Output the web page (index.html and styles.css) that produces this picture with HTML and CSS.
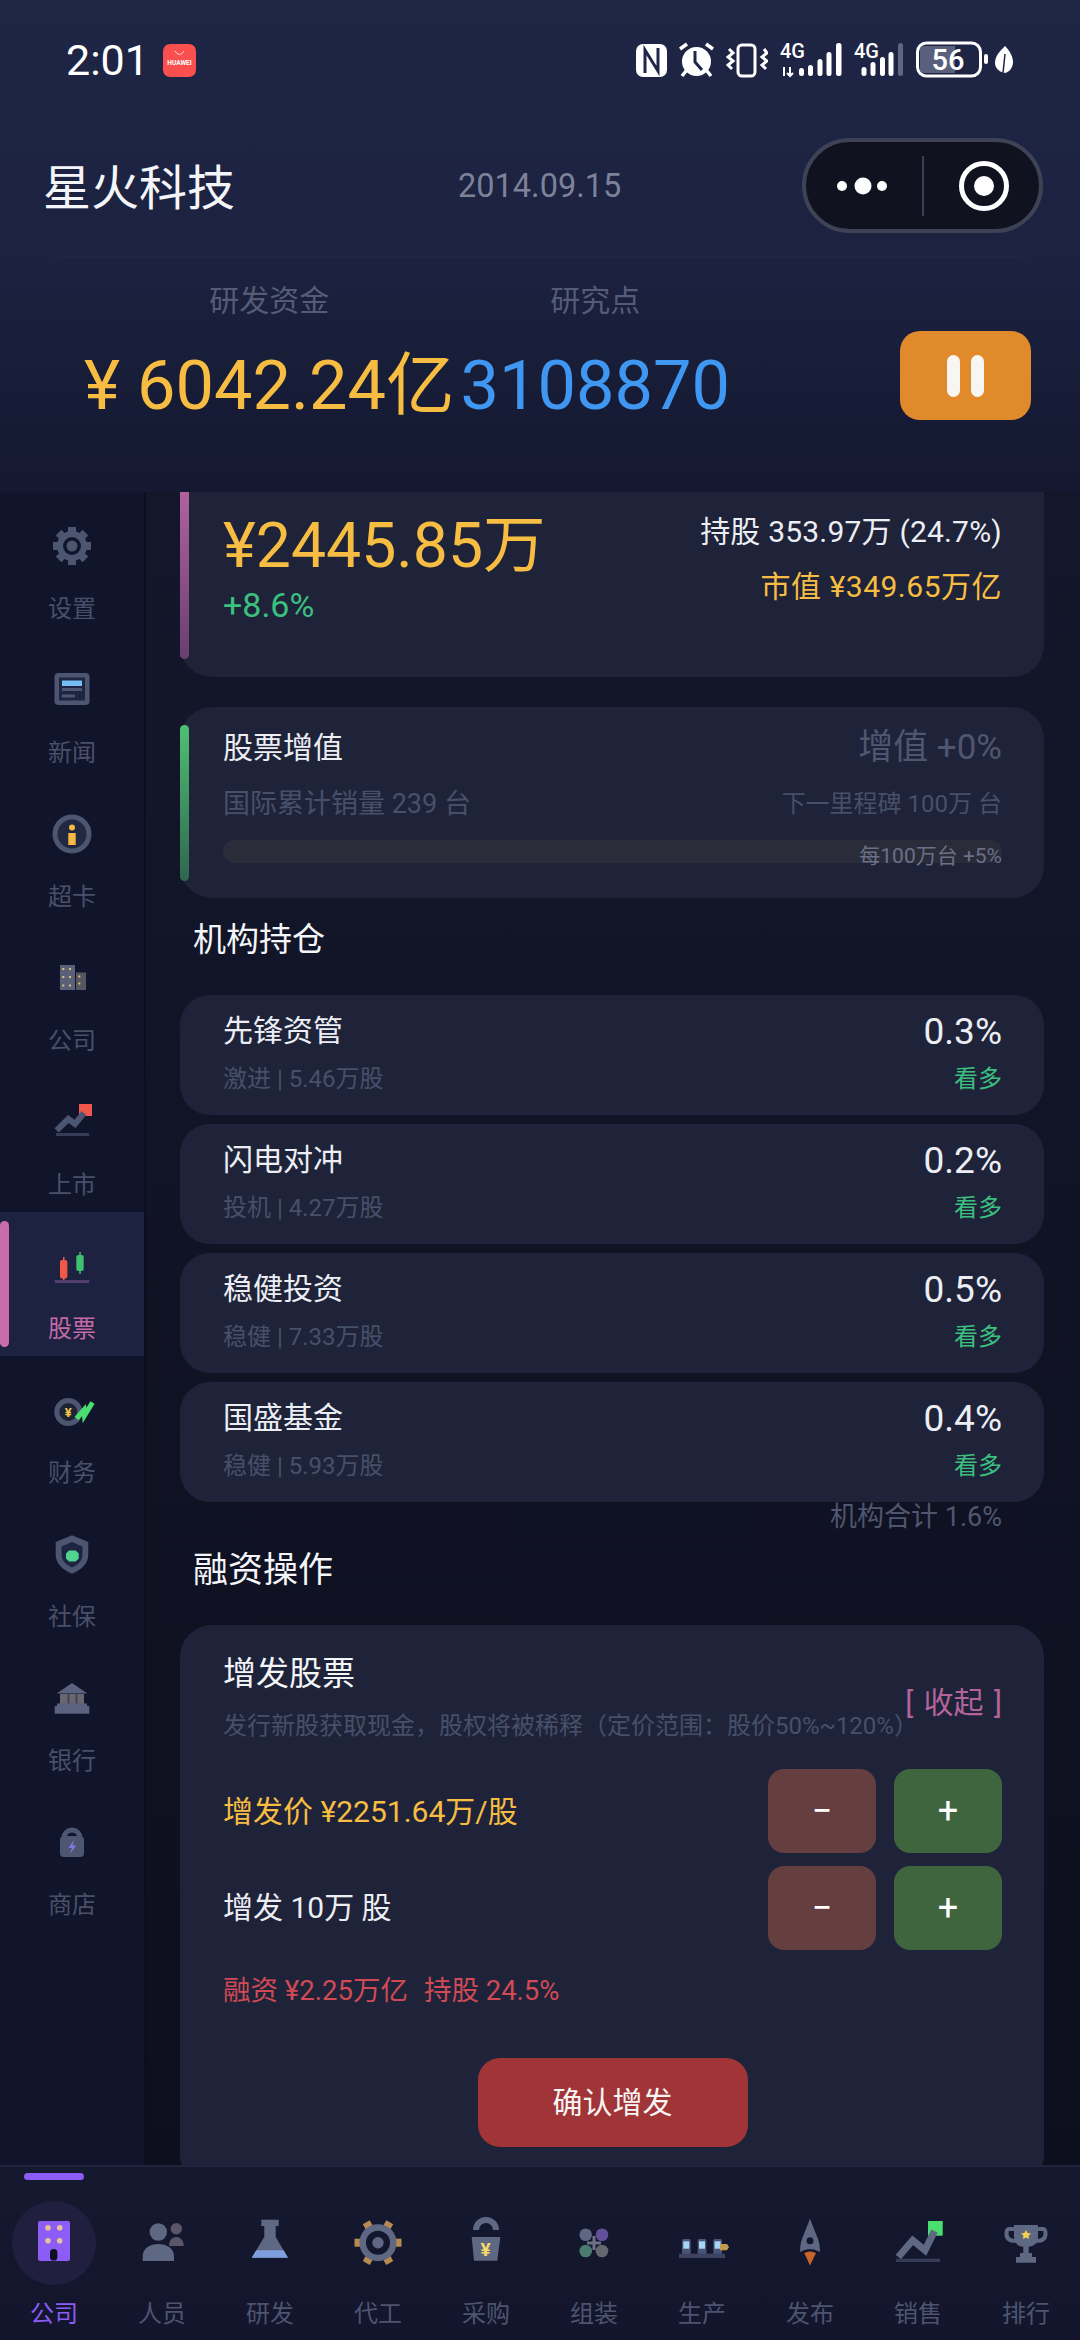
FILE: index.html
```html
<!DOCTYPE html>
<html lang="zh-CN">
<head>
    <meta charset="UTF-8">
    <title>星火科技</title>
    <link rel="stylesheet" href="styles.css">
</head>
<body>
<div class="screen">

    <header class="top">
        <div class="status-bar">
            <div class="status-left">
                <span class="time">2:01</span>
                <svg width="33" height="33" viewBox="0 0 33 33">
                    <rect width="33" height="33" rx="7" fill="#f94f4f"/>
                    <path d="M12 7 Q16.500 14 21 7" fill="none" stroke="#ffd9d9" stroke-width="1"/>
                    <text x="16.500" y="21" font-size="6.500" font-weight="700" fill="#fff" text-anchor="middle" font-family="Roboto">HUAWEI</text>
                </svg>
            </div>
            <div class="status-right">
                <svg width="31" height="40" viewBox="0 0 31 40">
                    <rect y="4" width="31" height="33" rx="7" fill="#fff"/>
                    <path d="M9 33 V10 L22 31 V8" fill="none" stroke="#20264a" stroke-width="3"/>
                </svg>
                <svg width="35" height="40" viewBox="0 0 35 40">
                    <circle cx="17.500" cy="21.500" r="14.500" fill="#fff"/>
                    <path d="M16 11 V22 L23 30" fill="none" stroke="#20264a" stroke-width="3"/>
                    <path d="M1 9 L8 4 M34 9 L27 4 M3 36 L7 31 M32 36 L28 31" stroke="#fff" stroke-width="3.500"/>
                </svg>
                <svg width="42" height="40" viewBox="0 0 42 40">
                    <rect x="12" y="5" width="17" height="31" rx="4" fill="none" stroke="#fff" stroke-width="3"/>
                    <path d="M3 9 L7 13 L2 17 L7 21 L2 25 L6 29 M38 9 L41 13 L36 17 L41 21 L36 25 L40 29" fill="none" stroke="#fff" stroke-width="3"/>
                </svg>
                <svg width="62" height="40" viewBox="0 0 62 40">
                    <text x="0" y="18" class="net">4G</text>
                    <path d="M4 27 V36 M10 27 V36 M7 33 L10 36 L13 33" fill="none" stroke="#fff" stroke-width="2"/>
                    <rect x="19" y="28" width="5" height="8" rx="2.500" fill="#fff"/>
                    <rect x="28" y="25" width="5" height="11" rx="2.500" fill="#fff"/>
                    <rect x="37.500" y="19" width="5" height="17" rx="2.500" fill="#fff"/>
                    <rect x="46.500" y="12" width="5" height="24" rx="2.500" fill="#fff"/>
                    <rect x="56" y="3" width="5.500" height="33" rx="2.500" fill="#fff"/>
                </svg>
                <svg width="50" height="40" viewBox="0 0 50 40">
                    <text x="0" y="18" class="net">4G</text>
                    <rect x="7.500" y="27" width="5" height="9" rx="2.500" fill="#fff"/>
                    <rect x="16.500" y="22" width="5" height="14" rx="2.500" fill="#fff"/>
                    <rect x="26" y="17" width="5" height="19" rx="2.500" fill="#fff"/>
                    <rect x="34.500" y="12" width="5" height="24" rx="2.500" fill="#fff"/>
                    <rect x="44" y="3" width="5" height="33" rx="2.500" fill="#5f6680"/>
                </svg>
                <svg width="72" height="40" viewBox="0 0 72 40">
                    <rect x="1.500" y="3" width="63" height="33" rx="9" fill="none" stroke="#fff" stroke-width="3"/>
                    <path d="M4 9 Q4 6 8 6 H39 V33 H8 Q4 33 4 30 Z" fill="#5a607c"/>
                    <text x="32" y="30" class="batt">56</text>
                    <rect x="68" y="14" width="4" height="10" rx="2" fill="#fff"/>
                </svg>
                <svg class="leaf" width="18" height="40" viewBox="0 0 18 40">
                    <path d="M10 6 C16 12 18 18 18 22 C18 28 14 32 10 33 C4 32 0 28 0 23 C0 16 5 11 10 6 Z" fill="#fff"/>
                    <path d="M10 14 L8 33" stroke="#20264a" stroke-width="1.500"/>
                </svg>
            </div>
        </div>

        <div class="title-row">
            <h1 class="company">星火科技</h1>
            <span class="date">2014.09.15</span>
            <div class="capsule">
                <svg width="120" height="60" viewBox="0 0 120 60">
                    <circle cx="36" cy="30" r="5" fill="#fff"/>
                    <circle cx="57" cy="30" r="8.500" fill="#fff"/>
                    <circle cx="76" cy="30" r="5" fill="#fff"/>
                    <rect x="116" width="2" height="60" fill="#3c4052"/>
                </svg>
                <svg width="100" height="60" viewBox="0 0 100 60">
                    <circle cx="58" cy="30" r="22.500" fill="none" stroke="#fff" stroke-width="5"/>
                    <circle cx="58" cy="30" r="10" fill="#fff"/>
                </svg>
            </div>
        </div>

        <div class="funds">
            <div class="fund">
                <span class="fund-label">研发资金</span>
                <span class="fund-value money">¥ 6042.24亿</span>
            </div>
            <div class="fund">
                <span class="fund-label">研究点</span>
                <span class="fund-value points">3108870</span>
            </div>
            <button class="pause"><i></i><i></i></button>
        </div>
    </header>

    <div class="middle">
        <nav class="side">
            <div class="side-item">
                <svg width="60" height="60" viewBox="0 0 60 60">
                    <g fill="#4d5670" transform="translate(30 30)">
                        <rect x="-4" y="-19" width="8" height="8"/>
                        <rect x="-4" y="-19" width="8" height="8" transform="rotate(45)"/>
                        <rect x="-4" y="-19" width="8" height="8" transform="rotate(90)"/>
                        <rect x="-4" y="-19" width="8" height="8" transform="rotate(135)"/>
                        <rect x="-4" y="-19" width="8" height="8" transform="rotate(180)"/>
                        <rect x="-4" y="-19" width="8" height="8" transform="rotate(225)"/>
                        <rect x="-4" y="-19" width="8" height="8" transform="rotate(270)"/>
                        <rect x="-4" y="-19" width="8" height="8" transform="rotate(315)"/>
                        <circle r="15"/>
                        <circle r="9" fill="#10152c"/>
                        <circle r="5.500"/>
                    </g>
                </svg>
                <span>设置</span>
            </div>
            <div class="side-item">
                <svg width="60" height="60" viewBox="0 0 60 60">
                    <rect x="12.500" y="13" width="35" height="32" rx="4" fill="#4d5670"/>
                    <rect x="17" y="17.500" width="26" height="23" fill="#1e2540"/>
                    <rect x="20" y="20.500" width="20" height="5.500" fill="#74bdf5"/>
                    <rect x="20" y="28" width="20" height="3" fill="#4d5670"/>
                    <rect x="20" y="34.500" width="13" height="3" fill="#4d5670"/>
                </svg>
                <span>新闻</span>
            </div>
            <div class="side-item">
                <svg width="60" height="60" viewBox="0 0 60 60">
                    <circle cx="30" cy="30" r="17" fill="#232842" stroke="#4d5670" stroke-width="5"/>
                    <circle cx="30" cy="23.500" r="3" fill="#f5b942"/>
                    <rect x="26.300" y="29" width="7.400" height="12" fill="#f5b942"/>
                </svg>
                <span>超卡</span>
            </div>
            <div class="side-item">
                <svg width="60" height="60" viewBox="0 0 60 60">
                    <rect x="18" y="17" width="15" height="25" fill="#5a6078"/>
                    <rect x="34" y="24.500" width="10" height="17.500" fill="#55565f"/>
                    <g fill="#d9c27a">
                        <rect x="20.300" y="20" width="2" height="2"/>
                        <rect x="27" y="20" width="2" height="2"/>
                        <rect x="20.300" y="28" width="2" height="2"/>
                        <rect x="27" y="28" width="2" height="2"/>
                        <rect x="20.300" y="36.500" width="2" height="2"/>
                        <rect x="27" y="36.500" width="2" height="2"/>
                        <rect x="36.300" y="27.500" width="2" height="2"/>
                        <rect x="36.300" y="34.500" width="2" height="2"/>
                    </g>
                </svg>
                <span>公司</span>
            </div>
            <div class="side-item">
                <svg width="60" height="60" viewBox="0 0 60 60">
                    <rect x="37" y="12" width="13" height="12" fill="#f2564a"/>
                    <polyline points="14.700,38.400 26.300,27 33,32 42,21" fill="none" stroke="#4d5670" stroke-width="6"/>
                    <rect x="14" y="41" width="33" height="3" fill="#363c58"/>
                </svg>
                <span>上市</span>
            </div>
            <div class="side-item active">
                <i class="side-pill"></i>
                <svg width="60" height="60" viewBox="0 0 60 60">
                    <rect x="21" y="21" width="1.500" height="24" fill="#f0594a"/>
                    <rect x="18" y="24" width="7.400" height="18.500" rx="2" fill="#f0594a"/>
                    <rect x="37.300" y="16" width="1.500" height="22" fill="#3fbf6f"/>
                    <rect x="34.300" y="19" width="7.400" height="16" rx="2" fill="#3fbf6f"/>
                    <rect x="12.700" y="44" width="34.600" height="3" fill="#513d6e"/>
                </svg>
                <span>股票</span>
            </div>
            <div class="side-item">
                <svg width="60" height="60" viewBox="0 0 60 60">
                    <circle cx="26.300" cy="32" r="11.500" fill="#1e2235" stroke="#4d5670" stroke-width="5"/>
                    <text x="26.300" y="36.500" class="yen-small">¥</text>
                    <polyline points="34.500,38.500 42,30 42.500,35.500 50.500,22.500" fill="none" stroke="#4ade70" stroke-width="5"/>
                </svg>
                <span>财务</span>
            </div>
            <div class="side-item">
                <svg width="60" height="60" viewBox="0 0 60 60">
                    <path d="M30 11.300 L46.300 18 V30 Q46.300 43 30 49.700 Q13.700 43 13.700 30 V18 Z" fill="#4d5670"/>
                    <path d="M30 18 L40.500 22.500 V30.500 Q40.500 39 30 43.500 Q19.500 39 19.500 30.500 V22.500 Z" fill="#1e2540"/>
                    <path d="M27 26.500 H33.700 L36.700 29.500 V34.500 L33.700 37.500 H27 L24 34.500 V29.500 Z" fill="#4fd38f"/>
                </svg>
                <span>社保</span>
            </div>
            <div class="side-item">
                <svg width="60" height="60" viewBox="0 0 60 60">
                    <path d="M30 15 L45.300 25.500 H14.700 Z" fill="#5a6280"/>
                    <rect x="18" y="26" width="24" height="12" fill="#6a6670"/>
                    <rect x="25.500" y="26" width="2" height="12" fill="#3e4358"/>
                    <rect x="33.500" y="26" width="2" height="12" fill="#3e4358"/>
                    <rect x="15" y="35.500" width="30" height="3" fill="#5a6280"/>
                    <rect x="12.700" y="38" width="34.600" height="7.700" fill="#5a6280"/>
                </svg>
                <span>银行</span>
            </div>
            <div class="side-item">
                <svg width="60" height="60" viewBox="0 0 60 60">
                    <path d="M22 26 A8 8 0 0 1 38 26" fill="none" stroke="#4d5670" stroke-width="5"/>
                    <rect x="18" y="24" width="24" height="21" rx="4" fill="#4d5670"/>
                    <path d="M32 28 L26.500 36 H30 L28 42 L34 33.500 H30.500 Z" fill="#7c7ce8"/>
                </svg>
                <span>商店</span>
            </div>
        </nav>

        <main class="main">
            <section class="card price-card">
                <i class="edge edge-pink"></i>
                <div>
                    <div class="price">¥2445.85万</div>
                    <div class="change">+8.6%</div>
                </div>
                <div class="holding">
                    <div class="holding-share">持股 353.97万 (24.7%)</div>
                    <div class="holding-value">市值 ¥349.65万亿</div>
                </div>
            </section>

            <section class="card growth-card">
                <i class="edge edge-green"></i>
                <div class="growth-row">
                    <span class="growth-title">股票增值</span>
                    <span class="growth-rate">增值 +0%</span>
                </div>
                <div class="growth-row growth-row-sub">
                    <span class="growth-sales">国际累计销量 239 台</span>
                    <span class="growth-next">下一里程碑 100万 台</span>
                </div>
                <div class="track"><span>每100万台 +5%</span></div>
            </section>

            <h2 class="section-title holders-title">机构持仓</h2>
            <div class="holders">
                <div class="holder">
                    <div>
                        <div class="holder-name">先锋资管</div>
                        <div class="holder-sub">激进 | 5.46万股</div>
                    </div>
                    <div class="holder-right">
                        <div class="holder-pct">0.3%</div>
                        <div class="holder-view">看多</div>
                    </div>
                </div>
                <div class="holder">
                    <div>
                        <div class="holder-name">闪电对冲</div>
                        <div class="holder-sub">投机 | 4.27万股</div>
                    </div>
                    <div class="holder-right">
                        <div class="holder-pct">0.2%</div>
                        <div class="holder-view">看多</div>
                    </div>
                </div>
                <div class="holder">
                    <div>
                        <div class="holder-name">稳健投资</div>
                        <div class="holder-sub">稳健 | 7.33万股</div>
                    </div>
                    <div class="holder-right">
                        <div class="holder-pct">0.5%</div>
                        <div class="holder-view">看多</div>
                    </div>
                </div>
                <div class="holder">
                    <div>
                        <div class="holder-name">国盛基金</div>
                        <div class="holder-sub">稳健 | 5.93万股</div>
                    </div>
                    <div class="holder-right">
                        <div class="holder-pct">0.4%</div>
                        <div class="holder-view">看多</div>
                    </div>
                </div>
            </div>
            <div class="holders-total">机构合计 1.6%</div>

            <h2 class="section-title finance-title">融资操作</h2>
            <section class="card issue-card">
                <div class="issue-head">
                    <div class="issue-text">
                        <div class="issue-title">增发股票</div>
                        <div class="issue-desc">发行新股获取现金，股权将被稀释（定价范围：股价50%~120%）</div>
                    </div>
                    <span class="issue-toggle">[ 收起 ]</span>
                </div>
                <div class="issue-row issue-row-first">
                    <span class="issue-price">增发价 ¥2251.64万/股</span>
                    <div class="steppers">
                        <button class="step step-minus">−</button>
                        <button class="step step-plus">+</button>
                    </div>
                </div>
                <div class="issue-row">
                    <span class="issue-count">增发 10万 股</span>
                    <div class="steppers">
                        <button class="step step-minus">−</button>
                        <button class="step step-plus">+</button>
                    </div>
                </div>
                <div class="issue-sum"><span>融资 ¥2.25万亿</span><span>持股 24.5%</span></div>
                <button class="issue-confirm">确认增发</button>
            </section>
        </main>
    </div>

    <nav class="tabs">
        <i class="tab-mark"></i>
        <div class="tab active">
            <div class="tab-icon">
                <svg width="60" height="60" viewBox="0 0 60 60">
                    <rect x="14" y="9" width="32" height="40" rx="2" fill="#8b5cf6"/>
                    <g fill="#e8c09a">
                        <circle cx="24" cy="15.700" r="2.800"/>
                        <circle cx="35.700" cy="15.700" r="2.800"/>
                        <circle cx="24" cy="28.700" r="2.800"/>
                        <circle cx="35.700" cy="28.700" r="2.800"/>
                    </g>
                    <rect x="26" y="37" width="7.400" height="11.500" rx="3.600" fill="#0e1022"/>
                </svg>
            </div>
            <span>公司</span>
        </div>
        <div class="tab">
            <div class="tab-icon">
                <svg width="60" height="60" viewBox="0 0 60 60">
                    <circle cx="44.300" cy="16.700" r="5.700" fill="#5a5668"/>
                    <path d="M37 34 C37 22 51.700 22 51.700 34 Z" fill="#5a5668"/>
                    <circle cx="26.300" cy="20" r="8.700" fill="#5f6883"/>
                    <path d="M10.700 49 V44 C10.700 28 42 28 42 44 V49 Z" fill="#5f6883"/>
                </svg>
            </div>
            <span>人员</span>
        </div>
        <div class="tab">
            <div class="tab-icon">
                <svg width="60" height="60" viewBox="0 0 60 60">
                    <rect x="21.300" y="7.700" width="17.400" height="6.300" fill="#5f6883"/>
                    <path d="M24.300 14 H35.700 V25 L48 45.700 H11.700 L24.300 25 Z" fill="#5f6883"/>
                    <path d="M16.200 38.300 H43.600 L48 45.700 H11.700 Z" fill="#7f9ee0"/>
                </svg>
            </div>
            <span>研发</span>
        </div>
        <div class="tab">
            <div class="tab-icon">
                <svg width="60" height="60" viewBox="0 0 60 60">
                    <g transform="translate(30 30.700)">
                        <g fill="#b98a4f">
                            <rect x="-4" y="-23.500" width="8" height="6" transform="rotate(30)"/>
                            <rect x="-4" y="-23.500" width="8" height="6" transform="rotate(90)"/>
                            <rect x="-4" y="-23.500" width="8" height="6" transform="rotate(150)"/>
                            <rect x="-4" y="-23.500" width="8" height="6" transform="rotate(210)"/>
                            <rect x="-4" y="-23.500" width="8" height="6" transform="rotate(270)"/>
                            <rect x="-4" y="-23.500" width="8" height="6" transform="rotate(330)"/>
                        </g>
                        <circle r="15.300" fill="none" stroke="#5f6883" stroke-width="6.500"/>
                        <circle r="5.700" fill="#5f6883"/>
                    </g>
                </svg>
            </div>
            <span>代工</span>
        </div>
        <div class="tab">
            <div class="tab-icon">
                <svg width="60" height="60" viewBox="0 0 60 60">
                    <path d="M20 18 A10 10 0 0 1 40 18" fill="none" stroke="#5f6883" stroke-width="6"/>
                    <path d="M15.700 25 H44.300 L41.300 48.700 H18 Z" fill="#5f6883"/>
                    <text x="29.500" y="44" class="yen-bag">¥</text>
                </svg>
            </div>
            <span>采购</span>
        </div>
        <div class="tab">
            <div class="tab-icon">
                <svg width="60" height="60" viewBox="0 0 60 60">
                    <circle cx="21.700" cy="22.700" r="6.300" fill="#5f6883"/>
                    <circle cx="38" cy="22.700" r="6.300" fill="#64509a"/>
                    <circle cx="21.700" cy="39" r="6.300" fill="#4a7a70"/>
                    <circle cx="38" cy="39" r="6.300" fill="#66666e"/>
                    <path d="M23 31 H37 M30 24 V38" stroke="#6d7184" stroke-width="3"/>
                </svg>
            </div>
            <span>组装</span>
        </div>
        <div class="tab">
            <div class="tab-icon">
                <svg width="60" height="60" viewBox="0 0 60 60">
                    <rect x="10" y="27" width="8.700" height="16" rx="1.500" fill="#4a5474"/>
                    <rect x="25.700" y="27" width="8.700" height="16" rx="1.500" fill="#4a5474"/>
                    <rect x="41.300" y="27" width="8.700" height="16" rx="1.500" fill="#4a5474"/>
                    <rect x="11.300" y="29.300" width="6" height="7.400" fill="#a8d4f5"/>
                    <rect x="27" y="29.300" width="6" height="7.400" fill="#a8d4f5"/>
                    <rect x="42.600" y="29.300" width="6" height="7.400" fill="#a8d4f5"/>
                    <path d="M48 32 H55 L57 35 L55 38.300 H48 Z" fill="#c49a50"/>
                    <rect x="7" y="41.700" width="46" height="4.300" fill="#3d4460"/>
                </svg>
            </div>
            <span>生产</span>
        </div>
        <div class="tab">
            <div class="tab-icon">
                <svg width="60" height="60" viewBox="0 0 60 60">
                    <path d="M30 6.700 L36 22 Q40 30 40 40 Q30 34 20 40 Q20 30 24 22 Z" fill="#5f6883"/>
                    <circle cx="30" cy="28.700" r="3.500" fill="#121629"/>
                    <path d="M24.300 41 Q30 38 36 41 L30 53.500 Z" fill="#c8632a"/>
                </svg>
            </div>
            <span>发布</span>
        </div>
        <div class="tab">
            <div class="tab-icon">
                <svg width="60" height="60" viewBox="0 0 60 60">
                    <rect x="40" y="9" width="14.700" height="14.700" fill="#4ade70"/>
                    <polyline points="10.300,45 24.700,28.300 37,38.300 46.500,19" fill="none" stroke="#5f6883" stroke-width="7"/>
                    <rect x="8" y="46.700" width="44" height="3.300" fill="#363c58"/>
                </svg>
            </div>
            <span>销售</span>
        </div>
        <div class="tab">
            <div class="tab-icon">
                <svg width="60" height="60" viewBox="0 0 60 60">
                    <path d="M18 17 H13 Q10.500 17 10.500 22 Q10.500 29 20 29 M42 17 H47 Q49.500 17 49.500 22 Q49.500 29 40 29" fill="none" stroke="#5f6883" stroke-width="4"/>
                    <path d="M18 13 H42 V24 Q42 35 30 35 Q18 35 18 24 Z" fill="#5f6883"/>
                    <rect x="27.300" y="34" width="5.400" height="8" fill="#5f6883"/>
                    <rect x="24" y="41" width="12" height="5" fill="#5f6883"/>
                    <rect x="20" y="45" width="20" height="5.700" fill="#5f6883"/>
                    <path d="M30 18 L31.600 21 L35 21.500 L32.500 23.800 L33 27 L30 25.500 L27 27 L27.500 23.800 L25 21.500 L28.400 21 Z" fill="#f5d04a"/>
                </svg>
            </div>
            <span>排行</span>
        </div>
    </nav>

</div>
</body>
</html>
```

FILE: styles.css
```css
* {
    box-sizing: border-box;
}
body {
    margin: 0;
    font-family: Roboto, "Noto Sans CJK SC", sans-serif;
    background-color: #0e1022;
}
button {
    border: none;
    padding: 0;
    font-family: inherit;
}
.screen {
    display: flex;
    flex-direction: column;
    width: 1080px;
    height: 2340px;
    overflow: hidden;
}

/* header */
.top {
    height: 492px;
    padding-top: 40px;
    background: linear-gradient(#1f2545, #1c2240 50%, #141830);
}
.status-bar {
    display: flex;
    justify-content: space-between;
    height: 40px;
    padding: 0 67px 0 66px;
}
.status-left {
    display: flex;
    align-items: center;
    gap: 14px;
}
.time {
    font-size: 43px;
    line-height: 40px;
    color: #fff;
}
.status-right {
    display: flex;
    gap: 12px;
}
.leaf {
    margin-left: -5px;
}
.net {
    font-family: Roboto, sans-serif;
    font-size: 20px;
    font-weight: 500;
    fill: #fff;
}
.batt {
    font-family: Roboto, sans-serif;
    font-size: 29px;
    font-weight: 500;
    fill: #fff;
    text-anchor: middle;
}
.title-row {
    display: flex;
    align-items: center;
    height: 95px;
    margin-top: 58px;
    padding: 0 37px 0 43px;
}
.company {
    margin: -3px 0 0;
    font-size: 48px;
    font-weight: 400;
    color: #f4f5f8;
}
.date {
    margin-left: 223px;
    font-size: 32.500px;
    color: #7c8299;
}
.capsule {
    display: flex;
    align-items: center;
    width: 241px;
    height: 95px;
    margin-left: auto;
    border: 4px solid #3e4255;
    border-radius: 48px;
    background-color: #10131f;
}
.funds {
    display: flex;
    height: 236px;
    margin: 23px 41px 0;
    padding: 25px 8px 0 43px;
    border-top: 2px solid rgba(255, 255, 255, 0.018);
    border-radius: 24px 24px 0 0;
}
.fund {
    display: flex;
    flex-direction: column;
    align-items: center;
    margin-right: 6px;
}
.fund-label {
    font-size: 30px;
    line-height: 36px;
    color: #555c76;
}
.fund-value {
    margin-top: 22px;
    font-size: 68.500px;
    line-height: 90px;
}
.money {
    color: #f6bd42;
}
.points {
    color: #3f97f2;
}
.pause {
    display: flex;
    justify-content: center;
    align-items: center;
    gap: 11px;
    width: 131px;
    height: 89px;
    margin: 48px 0 0 auto;
    border-radius: 20px;
    background-color: #e08a2b;
}
.pause i {
    width: 13px;
    height: 42px;
    border-radius: 7px;
    background-color: #f8f6f2;
}

/* middle */
.middle {
    display: flex;
    flex: 1;
    min-height: 0;
}
.side {
    width: 146px;
    border-right: 2px solid #0c0e1c;
    background-color: #10152c;
}
.side-item {
    position: relative;
    display: flex;
    flex-direction: column;
    align-items: center;
    height: 144px;
    padding-top: 24px;
    font-size: 24px;
    color: #4a5069;
}
.side-item span {
    margin-top: 17px;
    line-height: 32px;
}
.side-item.active {
    background-color: #1c2240;
    color: #c46aa6;
}
.side-pill {
    position: absolute;
    left: 0;
    top: 9px;
    width: 9px;
    height: 126px;
    border-radius: 5px;
    background-color: #c96cac;
}
.main {
    flex: 1;
    padding: 0 36px 0 34px;
    overflow: hidden;
    background: linear-gradient(#14172b, #0d0f1e);
}
.card {
    position: relative;
    border-radius: 32px;
    background-color: #1e233a;
}
.edge {
    position: absolute;
    left: 0;
    width: 9px;
    border-radius: 5px;
}
.edge-pink {
    top: 0;
    bottom: 18px;
    background: linear-gradient(#c06aa8, #6a3f70);
}
.edge-green {
    top: 18px;
    bottom: 17px;
    background: linear-gradient(#4fbf73, #2f6650);
}
.price-card {
    display: flex;
    justify-content: space-between;
    height: 225px;
    margin-top: -40px;
    padding: 59px 42px 0 43px;
}
.price {
    font-size: 62.500px;
    line-height: 70px;
    color: #f6bd42;
}
.change {
    margin-top: 4px;
    font-size: 34px;
    line-height: 40px;
    color: #3bc07f;
}
.holding {
    padding-top: 1px;
    text-align: right;
    font-size: 30px;
    line-height: 40px;
}
.holding-share {
    letter-spacing: 0.200px;
    color: #eceef3;
}
.holding-value {
    margin-top: 15px;
    letter-spacing: 0.500px;
    color: #f6bd42;
}
.growth-card {
    height: 191px;
    margin-top: 30px;
    padding: 21px 42px 0 43px;
}
.growth-row {
    display: flex;
    justify-content: space-between;
    line-height: 40px;
}
.growth-row-sub {
    margin-top: 18px;
    line-height: 36px;
}
.growth-title {
    font-size: 30px;
    color: #eceef3;
}
.growth-rate {
    font-size: 35px;
    color: #4f5670;
}
.growth-sales {
    font-size: 27px;
    color: #475069;
}
.growth-next {
    font-size: 24px;
    color: #475069;
}
.track {
    display: flex;
    justify-content: flex-end;
    height: 23px;
    margin-top: 18px;
    border-radius: 12px;
    background-color: #2a2c3a;
}
.track span {
    font-size: 21px;
    line-height: 33px;
    color: #6a7088;
}
.section-title {
    margin: 0;
    padding-left: 13px;
    font-weight: 400;
    line-height: 44px;
    color: #f4f5f8;
}
.holders-title {
    margin-top: 20px;
    font-size: 33px;
}
.holders {
    display: flex;
    flex-direction: column;
    gap: 9px;
    margin-top: 33px;
}
.holder {
    display: flex;
    justify-content: space-between;
    height: 120px;
    padding: 16px 42px 0 43px;
    border-radius: 30px;
    background-color: #1e233a;
}
.holder-name {
    font-size: 30px;
    line-height: 40px;
    color: #eceef3;
}
.holder-sub {
    margin-top: 10px;
    font-size: 24px;
    line-height: 36px;
    color: #475069;
}
.holder-right {
    margin-top: -1px;
    text-align: right;
}
.holder-pct {
    font-size: 37px;
    line-height: 44px;
    color: #eceef3;
}
.holder-view {
    margin-top: 8px;
    font-size: 24px;
    line-height: 34px;
    color: #3bc07f;
}
.holders-total {
    margin-top: -1px;
    padding-right: 42px;
    text-align: right;
    font-size: 27px;
    line-height: 32px;
    color: #4f566f;
}
.finance-title {
    margin-top: 16px;
    font-size: 35px;
}
.issue-card {
    margin-top: 32px;
    padding: 27px 42px 40px 43px;
}
.issue-head {
    display: flex;
    justify-content: space-between;
    align-items: center;
}
.issue-text {
    flex: 0 0 680px;
    min-width: 0;
}
.issue-title {
    font-size: 33px;
    line-height: 44px;
    color: #f4f5f8;
}
.issue-desc {
    margin-top: 14px;
    font-size: 24px;
    line-height: 32px;
    white-space: nowrap;
    color: #475069;
}
.issue-toggle {
    flex-shrink: 0;
    margin-top: 6px;
    font-size: 30px;
    word-spacing: 3px;
    color: #b5649a;
}
.issue-row {
    display: flex;
    justify-content: space-between;
    align-items: center;
    height: 84px;
    margin-top: 13px;
    font-size: 30px;
}
.issue-row-first {
    margin-top: 27px;
}
.issue-price {
    margin-top: -5px;
    color: #f6bd42;
}
.issue-count {
    margin-top: -7px;
    color: #eceef3;
}
.steppers {
    display: flex;
    gap: 18px;
}
.step {
    width: 108px;
    height: 84px;
    border-radius: 16px;
    font-size: 36px;
    color: #fff;
}
.step-minus {
    background-color: #653f3f;
}
.step-plus {
    background-color: #3f653f;
}
.issue-sum {
    display: flex;
    gap: 16px;
    margin-top: 21px;
    font-size: 27.500px;
    line-height: 40px;
    color: #d04a55;
}
.issue-confirm {
    display: block;
    width: 270px;
    height: 89px;
    margin: 47px auto 0;
    padding-bottom: 5px;
    border-radius: 22px;
    background-color: #a03437;
    font-size: 30px;
    color: #f8f4f4;
}

/* bottom tabs */
.tabs {
    position: relative;
    display: flex;
    height: 175px;
    padding-top: 34px;
    border-top: 2px solid #20253d;
    background: linear-gradient(#151930, #12152b);
}
.tab-mark {
    position: absolute;
    left: 24px;
    top: 6px;
    width: 60px;
    height: 7px;
    border-radius: 4px;
    background-color: #8b5cf6;
}
.tab {
    display: flex;
    flex-direction: column;
    align-items: center;
    width: 108px;
    font-size: 24px;
    color: #4d5470;
}
.tab.active {
    color: #8b5cf6;
}
.tab-icon {
    display: flex;
    justify-content: center;
    width: 84px;
    height: 84px;
    padding-top: 11px;
    border-radius: 50%;
}
.tab.active .tab-icon {
    background-color: #211f3f;
}
.tab span {
    margin-top: 13px;
    line-height: 32px;
}
.yen-small {
    font-family: Roboto, sans-serif;
    font-size: 13px;
    font-weight: 700;
    fill: #f5c94a;
    text-anchor: middle;
}
.yen-bag {
    font-family: Roboto, sans-serif;
    font-size: 19px;
    font-weight: 700;
    fill: #f5d96a;
    text-anchor: middle;
}
```
